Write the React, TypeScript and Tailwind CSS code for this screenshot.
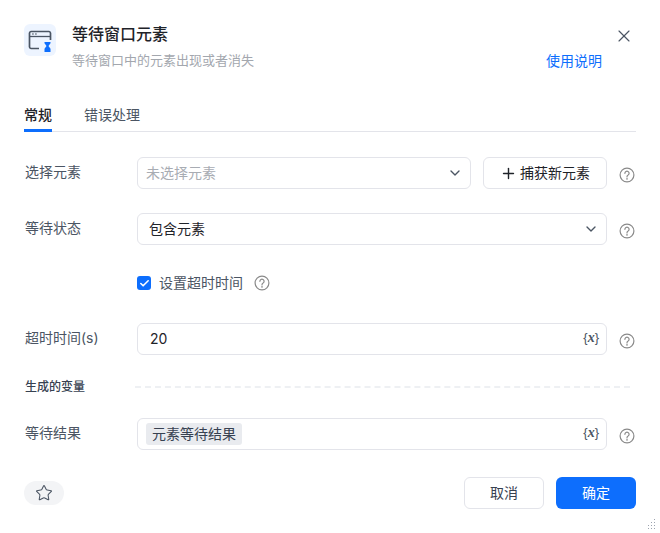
import { ChevronDown, Plus, X, Star, Check } from "lucide-react";

const font = "font-['Inter','Noto_Sans_CJK_SC',sans-serif]";

function Help() {
  return (
    <svg width="16" height="16" viewBox="0 0 16 16" fill="none" className="shrink-0 text-[#8a8a8a]">
      <circle cx="8" cy="8" r="6.9" stroke="currentColor" strokeWidth="1.2" />
      <path d="M5.9 6.3a2.1 2.1 0 1 1 3.2 1.8c-.7.4-1.1.8-1.1 1.6v.2" stroke="currentColor" strokeWidth="1.2" strokeLinecap="round" />
      <circle cx="8" cy="11.9" r=".8" fill="currentColor" />
    </svg>
  );
}

function VarMark() {
  return (
    <span className="mb-[2px] text-[13px] leading-none font-medium text-[#4b5563] font-['Liberation_Sans',sans-serif]">
      {"{"}
      <i className="font-['Liberation_Serif',serif] text-sm font-bold">x</i>
      {"}"}
    </span>
  );
}

function Row({ label, children, className }: { label: string; children: React.ReactNode; className?: string }) {
  return (
    <div className={`flex items-center ${className ?? ""}`}>
      <div className="w-[113px] pl-px pb-[3px] text-sm text-[#4b5563]">{label}</div>
      <div className="flex-1 min-w-0">{children}</div>
      <div className="w-[29px] pl-3 pt-1">
        <Help />
      </div>
    </div>
  );
}

function Box({ children }: { children: React.ReactNode }) {
  return <div className="flex h-8 items-center justify-between rounded-md border border-[#e3e4ea] bg-white pr-[7px] text-sm">{children}</div>;
}

export default function App() {
  return (
    <div className={`relative h-[533px] w-[660px] overflow-hidden bg-white px-6 pt-6 ${font}`}>
      {/* Header */}
      <div className="flex h-[68px]">
        <div className="flex h-8 w-8 items-center justify-center rounded-md bg-[#edf4ff]">
          <svg width="32" height="32" viewBox="0 0 32 32" fill="none">
            <path d="M15 24.5H7A1.7 1.7 0 0 1 5.5 23V9A1.7 1.7 0 0 1 7 7.5h18A1.7 1.7 0 0 1 26.5 9v7" stroke="#4b5563" strokeWidth="1.7" />
            <path d="M5.5 12.5h21" stroke="#4b5563" strokeWidth="1.3" />
            <path d="M8 10h1.8M11 10h1.8" stroke="#4b5563" strokeWidth="1.2" />
            <path d="M20.5 18h6v1.2l-2 2.8 2 2.8V28h-6v-3.2l2-2.8-2-2.8z" fill="#0d6efd" />
          </svg>
        </div>
        <div className="ml-4 flex-1">
          <div className="text-base leading-5 font-medium text-[#1f2329]">等待窗口元素</div>
          <div className="mt-[6px] text-[13px] leading-5 text-[#a3a7ae]">等待窗口中的元素出现或者消失</div>
        </div>
        <div className="flex flex-col items-end">
          <X size={20} strokeWidth={1.4} className="mt-[2px] mr-[2px] text-[#4b5563]" />
          <a className="mt-[5px] mr-[34px] text-sm leading-5 text-[#0d6efd]">使用说明</a>
        </div>
      </div>

      {/* Tabs */}
      <div className="mt-[3px] flex h-[37px] gap-8 border-b border-[#e3e4ea] text-sm">
        <div className="h-[37px] border-b-[3px] border-[#0d6efd] pt-[10px] font-medium text-[#1f2329]">常规</div>
        <div className="pt-[10px] text-[#4b5563]">错误处理</div>
      </div>

      {/* Form */}
      <Row label="选择元素" className="mt-[25px]">
        <div className="flex gap-3">
          <div className="flex h-8 w-[334px] items-center justify-between rounded-md border border-[#e3e4ea] pr-[7px] pl-2 text-sm text-[#a8acb3]">
            未选择元素
            <ChevronDown size={16} className="text-[#4b5563]" />
          </div>
          <button className="flex h-8 flex-1 items-center justify-center gap-[3px] rounded-md border border-[#e3e4ea] text-sm text-[#1f2329]">
            <Plus size={17} strokeWidth={2} />
            捕获新元素
          </button>
        </div>
      </Row>

      <Row label="等待状态" className="mt-6">
        <Box>
          <span className="pl-[11px] text-[#1f2329]">包含元素</span>
          <ChevronDown size={16} className="text-[#4b5563]" />
        </Box>
      </Row>

      <div className="mt-[27px] ml-[113px] flex h-[22px] items-center">
        <span className="flex h-[14px] w-[14px] items-center justify-center rounded-[3px] bg-[#0d6efd]">
          <Check size={11} strokeWidth={3.5} className="text-white" />
        </span>
        <span className="ml-2 text-sm text-[#4b5563]">设置超时时间</span>
        <span className="ml-[11px]">
          <Help />
        </span>
      </div>

      <Row label="超时时间(s)" className="mt-[29px]">
        <Box>
          <span className="pl-3 text-[#1f2329]">20</span>
          <VarMark />
        </Box>
      </Row>

      <div className="mt-[22px] flex h-5 items-center">
        <span className="w-[111px] pl-px text-xs font-medium text-[#374151]">生成的变量</span>
        <span className="mr-[6px] flex-1 border-t-2 border-dashed border-[#eef0f3]" />
      </div>

      <Row label="等待结果" className="mt-[21px]">
        <Box>
          <span className="ml-2 rounded-[3px] bg-[#e9ebef] px-[6px] py-px text-sm leading-5 text-[#374151]">元素等待结果</span>
          <VarMark />
        </Box>
      </Row>

      {/* Footer */}
      <div className="mt-[27px] flex items-center justify-between">
        <div className="flex h-6 w-10 items-center justify-center rounded-full bg-[#f3f4f6]">
          <Star size={18} strokeWidth={1.4} className="text-[#4b5563]" />
        </div>
        <div className="flex gap-3">
          <button className="h-8 w-20 rounded-md border border-[#e3e4ea] text-sm text-[#374151]">取消</button>
          <button className="h-8 w-20 rounded-md bg-[#0d6efd] text-sm text-white">确定</button>
        </div>
      </div>

      {/* Resize grip */}
      <svg width="10" height="10" viewBox="0 0 10 10" className="absolute right-1 bottom-1 text-[#9ca3af]" fill="currentColor">
        <path d="M8 0h1v1H8zM8 3h1v1H8zM5 3h1v1H5zM8 6h1v1H8zM5 6h1v1H5zM2 6h1v1H2zM8 9h1v1H8zM5 9h1v1H5zM2 9h1v1H2z" />
      </svg>
    </div>
  );
}
